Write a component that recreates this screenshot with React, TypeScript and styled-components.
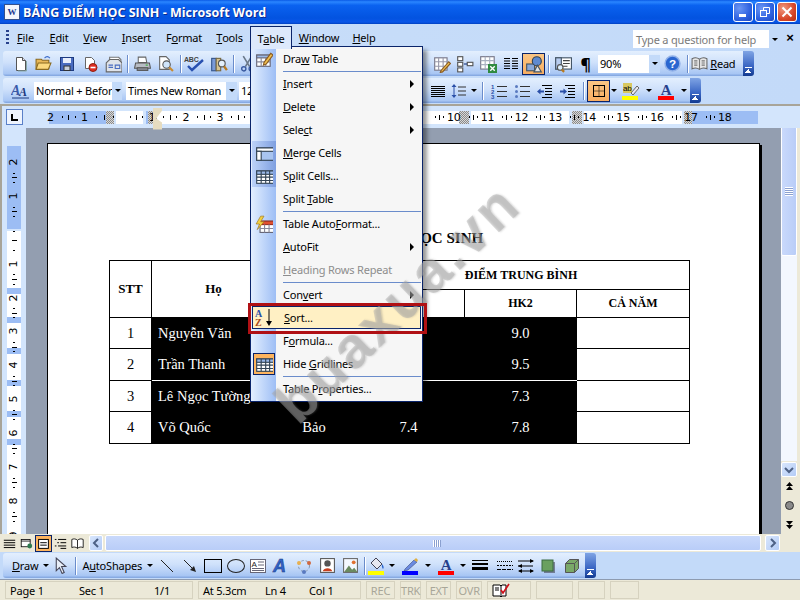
import React from 'react'
import styled, { createGlobalStyle, css } from 'styled-components'

const ui = '"Noto Sans", "DejaVu Sans", sans-serif'
const NAVY = '#0a246a'

const GlobalStyle = createGlobalStyle`
  html, body { margin: 0; padding: 0; width: 800px; height: 600px; overflow: hidden; }
  body { font-family: ${ui}; font-size: 11px; letter-spacing: -0.2px; color: #000; }
`

/* ---------- icons ---------- */

type IconProps = { size?: number }
const Svg: React.FC<React.PropsWithChildren<IconProps>> = ({ size = 16, children }) => (
  <svg width={size} height={size} viewBox="0 0 16 16" fill="none" style={{ display: 'block' }}>
    {children}
  </svg>
)

const NewDoc = () => (
  <Svg>
    <path d="M3.5 1.5h6l3 3v10h-9z" fill="#fff" stroke="#555" />
    <path d="M9.5 1.5v3h3" fill="#dde" stroke="#555" />
    <path d="M13.5 5v10H5" stroke="#8aa" />
  </Svg>
)
const OpenFolder = () => (
  <Svg size={17}>
    <path d="M1 4h5l1 1h6v8H1z" fill="#e8b858" stroke="#8a6a20" />
    <path d="M3 7.5h12l-2.5 6H1z" fill="#fbd97e" stroke="#8a6a20" />
    <path d="M9 3c1.5-2 3.500-2 5 0" stroke="#3a6ac8" />
  </Svg>
)
const Floppy = () => (
  <Svg>
    <rect x="1.500" y="1.500" width="13" height="13" fill="#4a6cc0" stroke="#1d3a80" />
    <rect x="4" y="2" width="8" height="5" fill="#e8eefc" />
    <rect x="5" y="10" width="6" height="4.500" fill="#c8d0dc" stroke="#333" />
  </Svg>
)
const Permission = () => (
  <Svg>
    <path d="M3.500 1.500h6l3 3v8h-9z" fill="#fff" stroke="#666" />
    <circle cx="11" cy="11.500" r="4" fill="#e02c20" stroke="#902010" />
    <rect x="8.500" y="10.700" width="5" height="1.600" fill="#fff" />
  </Svg>
)
const Email = () => (
  <Svg size={18}>
    <path d="M5 2h8l2 2v5H5z" fill="#fff" stroke="#777" />
    <path d="M2 7l3-3h8l3 3v8H2z" fill="#dfe3ea" stroke="#666" />
    <path d="M4 9h4M4 11h4M10 9h4v3h-4z" stroke="#4a6cc0" />
  </Svg>
)
const Printer = () => (
  <Svg size={17}>
    <path d="M4 2h7l1 5H4z" fill="#fff" stroke="#666" />
    <path d="M1.500 7.500h13l1 5h-15z" fill="#b8bcc4" stroke="#555" />
    <rect x="3" y="12" width="10" height="2.500" fill="#8a8e98" stroke="#555" />
    <rect x="11" y="9" width="2" height="1" fill="#30b030" />
  </Svg>
)
const Preview = () => (
  <Svg size={17}>
    <path d="M2.500 1.500h6l3 3v9h-9z" fill="#fff" stroke="#666" />
    <circle cx="9" cy="9" r="3.500" fill="#cfe4fa" stroke="#555" />
    <path d="M11.500 11.500l3.500 3.500" stroke="#c88a30" strokeWidth="2" />
  </Svg>
)
const Spell = () => (
  <svg width="24" height="18" viewBox="0 0 24 18" style={{ display: 'block' }}>
    <text x="1" y="7" fontFamily='"Liberation Sans", sans-serif' fontSize="7" fontWeight="700" fill="#444">
      ABC
    </text>
    <path d="M5 11l4 4L20 5" stroke="#2850b0" strokeWidth="2.400" fill="none" />
  </svg>
)
const Research = () => (
  <Svg size={18}>
    <rect x="1.500" y="3" width="4" height="11" fill="#7a9ad8" stroke="#35558c" />
    <rect x="5.500" y="3" width="4" height="11" fill="#d9c490" stroke="#7a6a40" />
    <circle cx="10.500" cy="7.500" r="3" fill="#e4f0fc" stroke="#555" />
    <path d="M12.500 10l2.500 3.500" stroke="#b87a20" strokeWidth="2" />
  </Svg>
)
const Scissors = () => (
  <Svg size={17}>
    <path d="M4 1l6 10M12 1L6 11" stroke="#6a7888" strokeWidth="1.500" />
    <circle cx="4.500" cy="13" r="2" stroke="#3a5aa0" strokeWidth="1.300" />
    <circle cx="11.500" cy="13" r="2" stroke="#3a5aa0" strokeWidth="1.300" />
  </Svg>
)
const TablesBorders = () => (
  <Svg size={18}>
    <rect x="1.500" y="2.500" width="11" height="11" fill="#fff" stroke="#778" />
    <path d="M1.500 6h11M1.500 10h11M5 2.500v11M9 2.500v11" stroke="#99a" />
    <path d="M7 14l7-8 1.500 1.500-7 7.500-2 .5z" fill="#f0c050" stroke="#8a5a20" />
  </Svg>
)
const InsertTable = () => (
  <Svg size={18}>
    <rect x="1.500" y="1.500" width="4.500" height="3.500" fill="#fff" stroke="#555" />
    <rect x="1.500" y="6.500" width="4.500" height="3.500" fill="#fff" stroke="#555" />
    <rect x="1.500" y="11.500" width="4.500" height="3.500" fill="#fff" stroke="#555" />
    <rect x="10" y="6.500" width="5" height="3" fill="#fff" stroke="#555" />
    <path d="M7 8h3" stroke="#1d3a80" />
  </Svg>
)
const ExcelSheet = () => (
  <Svg size={18}>
    <rect x="1.500" y="1.500" width="12" height="11" fill="#fff" stroke="#778" />
    <path d="M1.500 5h12M1.500 8.500h12M5.500 1.500v11M9.500 1.500v11" stroke="#a8b0c0" />
    <rect x="8" y="8" width="8" height="8" fill="#2f8a40" />
    <path d="M10 10l4 4M14 10l-4 4" stroke="#fff" strokeWidth="1.200" />
  </Svg>
)
const Columns = () => (
  <Svg>
    <path d="M1 2.500h6M1 5h6M1 7.500h6M1 10h6M1 12.500h6M9 2.500h6M9 5h6M9 7.500h6M9 10h6M9 12.500h6" stroke="#000" />
  </Svg>
)
const DrawingShapes = () => (
  <Svg size={18}>
    <rect x="1.500" y="8" width="7" height="6" fill="#8aa8d8" stroke="#456" />
    <circle cx="10.500" cy="5.500" r="4" fill="#5f8ad0" stroke="#345" />
    <path d="M8 15l3-6 3.500 6z" fill="#e6e6e6" stroke="#456" />
  </Svg>
)
const DocMap = () => (
  <Svg size={18}>
    <rect x="1.500" y="2.500" width="14" height="10" fill="#fff" stroke="#456" />
    <rect x="1.500" y="2.500" width="5" height="10" fill="#b8cdf0" stroke="#456" />
    <path d="M8 5h6M8 7.500h6M8 10h4" stroke="#444" />
    <circle cx="5.500" cy="11" r="2.500" fill="#dcefff" stroke="#555" />
    <path d="M7 13l2 2" stroke="#b87a20" strokeWidth="2" />
  </Svg>
)
const HelpCircle = () => (
  <Svg size={17}>
    <circle cx="8" cy="8" r="7" fill="#2a66d0" stroke="#90b0e8" strokeWidth="1.400" />
    <text x="8" y="12" textAnchor="middle" fontFamily='"Liberation Sans", sans-serif' fontWeight="700" fontSize="11" fill="#fff">
      ?
    </text>
  </Svg>
)
const OpenBook = () => (
  <Svg size={17}>
    <path d="M8 4C6 2.500 3 2.500 1 3.500V13c2-1 5-1 7 .5 2-1.500 5-1.500 7-.5V3.500C13 2.500 10 2.500 8 4z" fill="#e6e6e6" stroke="#666" />
    <path d="M8 4v9.500M3 5.500h3M3 7.500h3M3 9.500h3M10 5.500h3M10 7.500h3M10 9.500h3" stroke="#777" />
  </Svg>
)
const StyleIcon = () => (
  <svg width="19" height="18" viewBox="0 0 19 18" style={{ display: 'block' }}>
    <text x="0" y="13" fontFamily='"Liberation Serif", serif' fontStyle="italic" fontWeight="700" fontSize="14" fill="#3a5aa8">
      A
    </text>
    <text x="8" y="14" fontFamily='"Liberation Serif", serif' fontStyle="italic" fontWeight="700" fontSize="12" fill="#1d3a80">
      A
    </text>
    <path d="M1 16h17" stroke="#1d3a80" />
  </svg>
)
const Justify = () => (
  <Svg>
    <path d="M1 3.500h14M1 5.500h14M1 7.500h14M1 9.500h14M1 11.500h14M1 13.500h14" stroke="#000" />
  </Svg>
)
const LineSpacing = () => (
  <Svg>
    <path d="M3 1l2.500 3h-5zM3 15l2.500-3h-5z" fill="#2a4fa8" />
    <path d="M3 4v8" stroke="#2a4fa8" />
    <path d="M7 4h8M7 8h8M7 12h8" stroke="#333" />
  </Svg>
)
const Numbered = () => (
  <svg width="16" height="16" viewBox="0 0 16 16" style={{ display: 'block' }}>
    <text x="0" y="6" fontSize="6" fontWeight="700" fontFamily='"Liberation Sans", sans-serif' fill="#2a4fa8">1</text>
    <text x="0" y="11" fontSize="6" fontWeight="700" fontFamily='"Liberation Sans", sans-serif' fill="#2a4fa8">2</text>
    <text x="0" y="16" fontSize="6" fontWeight="700" fontFamily='"Liberation Sans", sans-serif' fill="#2a4fa8">3</text>
    <path d="M6 3.500h10M6 8.500h10M6 13.500h10" stroke="#333" />
  </svg>
)
const Bullets = () => (
  <Svg>
    <circle cx="2.500" cy="3.500" r="1.500" fill="#5a7ac0" />
    <circle cx="2.500" cy="8.500" r="1.500" fill="#5a7ac0" />
    <circle cx="2.500" cy="13.500" r="1.500" fill="#5a7ac0" />
    <path d="M6 3.500h10M6 8.500h10M6 13.500h10" stroke="#333" />
  </Svg>
)
const Outdent = () => (
  <Svg>
    <path d="M5 2.500h10M8 5.500h7M8 8.500h7M8 11.500h7M5 14.500h10" stroke="#000" />
    <path d="M0 8.500l3.500-3v2H7v2H3.500v2z" fill="#2a4fa8" />
  </Svg>
)
const Indent = () => (
  <Svg>
    <path d="M5 2.500h10M8 5.500h7M8 8.500h7M8 11.500h7M5 14.500h10" stroke="#000" />
    <path d="M7 8.500l-3.500-3v2H0v2h3.500v2z" fill="#2a4fa8" />
  </Svg>
)
const BorderBox = () => (
  <Svg>
    <rect x="2.500" y="2.500" width="11" height="11" stroke="#000" />
    <path d="M8 3.500v9M3.500 8h9" stroke="#000" strokeDasharray="1 1" />
  </Svg>
)
const Highlighter = () => (
  <svg width="18" height="18" viewBox="0 0 18 18" style={{ display: 'block' }}>
    <rect x="1" y="1" width="9" height="10" fill="#d8c860" />
    <text x="1" y="9" fontSize="8" fontFamily='"Liberation Sans", sans-serif' fill="#000">ab</text>
    <path d="M9 11l6-7 2 2-6 7z" fill="#e8e8f0" stroke="#666" />
    <rect x="0" y="14" width="16" height="4" fill="#ffff00" />
  </svg>
)
const FontColor: React.FC<{ bar?: string }> = ({ bar = '#ff0000' }) => (
  <svg width="17" height="18" viewBox="0 0 17 18" style={{ display: 'block' }}>
    <text x="8" y="13" textAnchor="middle" fontFamily='"Liberation Serif", serif' fontWeight="700" fontSize="15" fill="#27408b">
      A
    </text>
    <rect x="0" y="14" width="16" height="4" fill={bar} />
  </svg>
)
const Pointer = () => (
  <Svg size={17}>
    <path d="M4 1v12l3-3 2.500 5.500 2-1L9 9h4z" fill="#e8eef8" stroke="#445" />
  </Svg>
)
const LineTool = () => (
  <Svg>
    <path d="M2 2l12 12" stroke="#222" />
  </Svg>
)
const ArrowTool = () => (
  <Svg>
    <path d="M2 2l10 10" stroke="#222" />
    <path d="M14 14l-6-2 4-4z" fill="#222" />
  </Svg>
)
const TextBoxTool = () => (
  <svg width="16" height="14" viewBox="0 0 16 14" style={{ display: 'block' }}>
    <rect x=".5" y=".5" width="15" height="13" fill="#fff" stroke="#667" />
    <text x="1.500" y="8" fontSize="8" fontFamily='"Liberation Sans", sans-serif' fill="#222">A</text>
    <path d="M8 3h6M8 6h6M2 9.500h12M2 11.500h12" stroke="#667" />
  </svg>
)
const WordArt = () => (
  <svg width="18" height="18" viewBox="0 0 18 18" style={{ display: 'block' }}>
    <text x="1" y="15" fontFamily='"Liberation Sans", sans-serif' fontStyle="italic" fontWeight="700" fontSize="18" fill="#2f62c8" stroke="#1d3a80" strokeWidth=".5">
      A
    </text>
  </svg>
)
const Diagram = () => (
  <Svg>
    <circle cx="8" cy="8" r="5.500" stroke="#8898b0" strokeDasharray="2.500 2" />
    <circle cx="3" cy="5" r="2" fill="#e8b050" />
    <circle cx="13" cy="5" r="2" fill="#d06840" />
    <circle cx="8" cy="14" r="2" fill="#5a7ac0" />
  </Svg>
)
const ClipArt = () => (
  <Svg size={17}>
    <rect x="1.500" y="1.500" width="13" height="13" fill="#fff" stroke="#555" />
    <circle cx="8" cy="6" r="3" fill="#555" />
    <path d="M3.500 13.500c1-4 8-4 9 0z" fill="#c84020" />
  </Svg>
)
const PictureIcon = () => (
  <Svg size={17}>
    <rect x="1.500" y="1.500" width="13" height="13" fill="#f4f8ff" stroke="#666" />
    <path d="M2 14l4.500-6 3 4 2-2 3 4z" fill="#6a8a60" />
    <circle cx="11" cy="5" r="1.800" fill="#e07030" />
  </Svg>
)
const FillBucket = () => (
  <svg width="18" height="18" viewBox="0 0 18 18" style={{ display: 'block' }}>
    <path d="M3 6l5-5 6 6-5 5z" fill="#e8e8f0" stroke="#445" />
    <path d="M14 7c2 2 2 4 1 5-1-1-1.500-3-1-5z" fill="#2a66d0" />
    <rect x="0" y="14" width="16" height="4" fill="#ffff00" />
  </svg>
)
const PenColor = () => (
  <svg width="17" height="18" viewBox="0 0 17 18" style={{ display: 'block' }}>
    <path d="M3 12l9-9 3 2-9 8-4 1z" fill="#6a8ae0" stroke="#3a4a80" strokeWidth=".6" />
    <path d="M12 3l2-2 2 2-1 2z" fill="#e0b040" />
    <rect x="0" y="14" width="16" height="4" fill="#0000ff" />
  </svg>
)
const LineStyle = () => (
  <Svg>
    <rect x="0" y="2" width="16" height="1" fill="#000" />
    <rect x="0" y="5" width="16" height="2" fill="#000" />
    <rect x="0" y="9" width="16" height="3" fill="#000" />
  </Svg>
)
const DashStyle = () => (
  <Svg>
    <path d="M0 3.500h16" stroke="#000" strokeDasharray="1 1" />
    <path d="M0 7.500h16" stroke="#000" strokeDasharray="2 1" />
    <path d="M0 11.500h16" stroke="#000" strokeDasharray="4 1" />
  </Svg>
)
const ArrowStyle = () => (
  <Svg>
    <path d="M0 3h15M0 8h15M1 13h14" stroke="#000" />
    <path d="M16 3l-4-2v4zM0 8l4-2v4zM0 13l4-2v4zM16 13l-4-2v4z" fill="#000" />
  </Svg>
)
const ShadowBox = () => (
  <Svg>
    <rect x="4" y="4" width="11" height="11" fill="#445" opacity=".6" />
    <rect x="2" y="2" width="11" height="11" fill="#6aa060" stroke="#3a6a40" />
  </Svg>
)
const Cube = () => (
  <Svg>
    <path d="M1.500 5.500l4-4h9v9l-4 4h-9z" fill="#7aa868" stroke="#555" />
    <path d="M1.500 5.500h9v9M10.500 5.500l4-4" stroke="#555" />
  </Svg>
)
const DrawTableIcon = () => (
  <Svg size={18}>
    <rect x="1.500" y="4.500" width="12" height="10" fill="#fff" stroke="#667" />
    <rect x="1.500" y="4.500" width="12" height="2.500" fill="#9ab8e8" stroke="#667" />
    <path d="M1.500 10.500h12M5.500 7v7.500M9.500 7v7.500" stroke="#889" />
    <path d="M8 11l6-8 2 1.500-6 8-2.500 1z" fill="#f0c050" stroke="#8a5a20" />
  </Svg>
)
const MergeIcon = () => (
  <Svg size={18}>
    <rect x="1.500" y="3.500" width="15" height="11" fill="#a8c4f0" stroke="#345" />
    <rect x="1.500" y="3.500" width="15" height="3" fill="#fff" stroke="#345" />
    <rect x="1.500" y="6.500" width="4" height="8" fill="#fff" stroke="#345" />
  </Svg>
)
const GridIcon = () => (
  <Svg size={18}>
    <rect x="1.500" y="3.500" width="15" height="11" fill="#fff" stroke="#345" />
    <rect x="1.500" y="3.500" width="15" height="3" fill="#9ab8e8" stroke="#345" />
    <path d="M1.500 9h15M1.500 12h15M5.500 3.500v11M9.500 3.500v11M13 3.500v11" stroke="#345" />
  </Svg>
)
const AutoFormatIcon = () => (
  <Svg size={18}>
    <rect x="4.500" y="5.500" width="12" height="10" fill="#fff" stroke="#667" />
    <rect x="4.500" y="5.500" width="12" height="3" fill="#e05030" stroke="#a03020" />
    <path d="M4.500 12h12M8.500 8.500v7M12.500 8.500v7" stroke="#889" />
    <path d="M5 1l-4 7h3l-2 5 6-7H5l3-5z" fill="#f4d040" stroke="#a07820" strokeWidth=".6" />
  </Svg>
)
const SortIcon = () => (
  <svg width="22" height="19" viewBox="0 0 22 19" style={{ display: 'block' }}>
    <text x="1" y="8.500" fontFamily='"Liberation Serif", serif' fontWeight="700" fontSize="10" fill="#2a4fa8">A</text>
    <text x="1" y="18" fontFamily='"Liberation Serif", serif' fontWeight="700" fontSize="10" fill="#a84a20">Z</text>
    <path d="M15 1v15" stroke="#000" />
    <path d="M15 18l-3-5h6z" fill="#000" />
  </svg>
)
const StatusBook = () => (
  <svg width="19" height="16" viewBox="0 0 19 16" style={{ display: 'block' }}>
    <path d="M1 3h7l1 1 1-1h4v11h-4l-1 1-1-1H1z" fill="#fff" stroke="#000" />
    <path d="M9 4v10M3 6h4M3 8h4" stroke="#000" />
    <path d="M9 8l2 3 6-9" stroke="#d01018" strokeWidth="1.600" fill="none" />
  </svg>
)
const ViewNormal = () => (
  <Svg size={13}>
    <path d="M1 4h14M1 7h14M1 10h14M1 13h14" stroke="#000" strokeWidth="1.200" />
  </Svg>
)
const ViewWeb = () => (
  <Svg size={13}>
    <rect x="1.500" y="3" width="11" height="9" fill="#fff" stroke="#000" />
    <path d="M1.500 5h11" stroke="#000" />
    <circle cx="12" cy="11" r="3" fill="#2f7a50" />
  </Svg>
)
const ViewPrint = () => (
  <Svg size={13}>
    <rect x="2" y="3" width="12" height="11" fill="#fff" stroke="#000" strokeWidth="1.200" />
    <path d="M4 7h8M4 10h8" stroke="#000" strokeWidth="1.200" />
  </Svg>
)
const ViewOutline = () => (
  <Svg size={13}>
    <path d="M1 3h2M5 3h10M4 7h2M8 7h7M1 11h2M5 11h10M8 14h7" stroke="#000" strokeWidth="1.200" />
  </Svg>
)
const ViewRead = () => (
  <Svg size={13}>
    <path d="M8 4C6 2 3 2 1 3v10c2-1 5-1 7 1 2-2 5-2 7-1V3c-2-1-5-1-7 1z" fill="#fff" stroke="#000" />
    <path d="M8 4v10" stroke="#000" />
  </Svg>
)

/* ---------- window ---------- */

const Desktop = styled.div`
  position: relative;
  width: 800px;
  height: 600px;
  display: flex;
  flex-direction: column;
  overflow: hidden;
  background: #c3daf9;
`

const TitleBar = styled.div`
  flex: 0 0 24px;
  display: flex;
  align-items: center;
  padding: 0 3px 0 4px;
  color: #fff;
  font-family: "Open Sans", "Noto Sans", sans-serif;
  font-weight: 700;
  font-size: 12.5px;
  letter-spacing: 0;
  text-shadow: 1px 1px 0 #0a2a90;
  background: linear-gradient(180deg, #0a5ae6 0%, #2a86ff 8%, #0a62f0 22%, #0353e0 75%, #0a56e8 92%, #0040c0 100%);
`

const WordBadge = styled.span`
  width: 16px;
  height: 16px;
  margin-right: 3px;
  box-sizing: border-box;
  background: #f4f6fc;
  border: 1px solid #34508c;
  color: #1d3a90;
  font: 700 9px/14px "Liberation Serif", serif;
  text-align: center;
  text-shadow: none;
`

const TitleText = styled.span`
  flex: 1;
  white-space: nowrap;
`

const Caption = styled.button<{ $close?: boolean }>`
  width: 20px;
  height: 20px;
  margin-left: 2px;
  padding: 0;
  display: flex;
  align-items: center;
  justify-content: center;
  border: 1px solid #fff;
  border-radius: 3px;
  background: ${({ $close }) =>
    $close
      ? 'radial-gradient(circle at 30% 30%, #f09a80, #d8482a 60%, #b83010)'
      : 'radial-gradient(circle at 30% 30%, #6a96f4, #2f62e0 60%, #1c48c0)'};
`

const Dock = styled.div`
  flex: 0 0 80px;
  display: flex;
  flex-direction: column;
  background: linear-gradient(90deg, #c9def9 0%, #c3daf9 100%);
`

const MenuBar = styled.div`
  flex: 0 0 22px;
  margin-top: 2px;
  display: flex;
  align-items: stretch;
  padding-left: 3px;
`

const Grip = styled.span`
  flex: none;
  width: 3px;
  margin: 4px 0 4px 3px;
  background: repeating-linear-gradient(180deg, #27418c 0 2px, transparent 2px 4px);
`

const MenuEntry = styled.span<{ $open?: boolean; $w: number }>`
  flex: 0 0 ${({ $w }) => $w}px;
  box-sizing: border-box;
  display: flex;
  align-items: center;
  justify-content: center;
  ${({ $open }) =>
    $open &&
    css`
      position: relative;
      z-index: 6;
      height: 23px;
      background: #dde9fb;
      border: 1px solid ${NAVY};
      border-bottom: none;
    `}
`

const HelpBox = styled.div`
  margin: 4px 0 0 auto;
  width: 147px;
  height: 18px;
  box-sizing: border-box;
  display: flex;
  align-items: center;
  padding-left: 3px;
  background: #fff;
  color: #7a7a7a;
`

const ComboArrow = styled.span`
  margin-left: auto;
  align-self: stretch;
  flex: 0 0 11px;
  display: flex;
  align-items: center;
  justify-content: center;
  background: #c3daf9;
  &::after {
    content: '';
    border: 3px solid transparent;
    border-top: 3px solid #000;
    border-bottom: none;
  }
`

const HelpClose = styled.span`
  width: 20px;
  margin-top: 3px;
  text-align: center;
  font: 700 13px/18px "Liberation Sans", sans-serif;
`

const ToolbarRow = styled.div<{ $width: number; $top: number }>`
  flex: 0 0 25px;
  width: ${({ $width }) => $width}px;
  margin-top: ${({ $top }) => $top}px;
  margin-left: 3px;
  display: flex;
  align-items: center;
  box-sizing: border-box;
  border-radius: 3px 0 0 3px;
  background: linear-gradient(180deg, #e3effe 0%, #cfe1fb 45%, #a8c6f4 90%, #7fa3de 100%);
`

const Btn = styled.span<{ $w?: number; $active?: boolean }>`
  flex: 0 0 ${({ $w = 23 }) => $w}px;
  height: 22px;
  box-sizing: border-box;
  display: flex;
  align-items: center;
  justify-content: center;
  ${({ $active }) =>
    $active &&
    css`
      background: linear-gradient(180deg, #fbc684, #f8ae62);
      border: 1px solid ${NAVY};
    `}
`

const Sep = styled.span<{ $w?: number }>`
  flex: 0 0 ${({ $w = 6 }) => $w}px;
  height: 18px;
  display: flex;
  justify-content: center;
  &::after {
    content: '';
    width: 1px;
    background: #6a8ccb;
    box-shadow: 1px 0 0 #fff;
  }
`

const Spacer = styled.span<{ $w: number }>`
  flex: 0 0 ${({ $w }) => $w}px;
`

const Drop = styled.span<{ $w?: number }>`
  flex: 0 0 ${({ $w = 9 }) => $w}px;
  display: flex;
  justify-content: center;
  &::after {
    content: '';
    border: 3px solid transparent;
    border-top: 3px solid #000;
    border-bottom: none;
  }
`

const Combo = styled.span<{ $w: number; $left?: number }>`
  flex: 0 0 ${({ $w }) => $w}px;
  margin-left: ${({ $left = 0 }) => $left}px;
  height: 18px;
  box-sizing: border-box;
  padding-left: 2px;
  display: flex;
  align-items: center;
  background: #fff;
  white-space: nowrap;
  overflow: hidden;
`

const Chevron = styled.span`
  flex: 0 0 11px;
  align-self: stretch;
  margin-left: auto;
  margin-right: -11px;
  display: flex;
  align-items: flex-end;
  justify-content: center;
  padding-bottom: 3px;
  box-sizing: border-box;
  border-radius: 0 3px 3px 0;
  background: linear-gradient(180deg, #7fa4e4 0%, #3a66c4 60%, #123a90 100%);
  &::after {
    content: '';
    width: 7px;
    height: 6px;
    background:
      linear-gradient(#fff, #fff) top / 7px 1px no-repeat,
      linear-gradient(135deg, transparent 50%, #fff 50%) left bottom / 4px 4px no-repeat,
      linear-gradient(225deg, transparent 50%, #fff 50%) right bottom / 4px 4px no-repeat;
  }
`

/* ---------- rulers ---------- */

const RulerBand = styled.div`
  flex: 0 0 24px;
  display: flex;
  align-items: center;
  box-sizing: border-box;
  border-top: 2px solid #a8a498;
  border-left: 2px solid #a8a498;
  background: #d3e5fc;
  padding-left: 4px;
`

const TabBtn = styled.span`
  flex: 0 0 17px;
  height: 16px;
  box-sizing: border-box;
  border: 1px solid #5a80c8;
  background: #eef4fe;
  display: flex;
  align-items: center;
  justify-content: center;
  &::after {
    content: '';
    width: 5px;
    height: 5px;
    border-left: 2px solid #000;
    border-bottom: 2px solid #000;
  }
`

const HRuler = styled.div`
  position: relative;
  margin-left: 24px;
  flex: 0 0 711px;
  height: 13px;
  display: flex;
`

const HSeg = styled.span<{ $w: number; $c: 'blue' | 'white' | 'grid' | 'gap' }>`
  flex: 0 0 ${({ $w }) => $w}px;
  background: ${({ $c }) =>
    $c === 'blue'
      ? '#9cbdf4'
      : $c === 'white'
        ? '#fff'
        : $c === 'grid'
          ? 'repeating-conic-gradient(#8a8a8a 0 25%, #d8d8d8 0 50%) 0 0 / 2px 2px'
          : 'transparent'};
`

const HMarks = styled.div`
  position: absolute;
  inset: 0;
  display: flex;
  font: 11px/13px "DejaVu Sans", sans-serif;
`

const HCell = styled.span<{ $w: number }>`
  flex: 0 0 ${({ $w }) => $w}px;
  display: flex;
  align-items: center;
  justify-content: space-between;
  padding: 0 6px 0 ${({ $w }) => ($w < 10 ? 0 : 2)}px;
  box-sizing: border-box;
`

const HNum = styled.span`
  flex: 0 0 0;
  display: flex;
  justify-content: center;
`

const HTick = styled.i<{ $major?: boolean }>`
  width: 1px;
  height: ${({ $major }) => ($major ? 5 : 2)}px;
  background: #000;
`

const Hourglass = styled.span`
  position: absolute;
  left: 106px;
  top: -3px;
  width: 9px;
  height: 22px;
  background: #e6dcc0;
  clip-path: polygon(0 0, 100% 0, 100% 15%, 35% 50%, 100% 68%, 100% 100%, 0 100%, 0 68%, 0 50%, 0 15%);
`

const Workspace = styled.div`
  flex: 0 0 406px;
  display: flex;
  overflow: hidden;
`

const LeftRail = styled.div`
  flex: 0 0 26px;
  box-sizing: border-box;
  border-left: 2px solid #a8a498;
  background: #d3e5fc;
  padding: 18px 0 0 5px;
`

const VRuler = styled.div`
  position: relative;
  width: 14px;
  display: flex;
  flex-direction: column;
  overflow: hidden;
  height: 388px;
`

const VSeg = styled.span<{ $h: number; $c: 'blue' | 'white' | 'gap' }>`
  flex: 0 0 ${({ $h }) => $h}px;
  background: ${({ $c }) => ($c === 'gap' ? 'transparent' : $c === 'blue' ? '#9cbdf4' : '#fff')};
`

const VMarks = styled.div`
  position: absolute;
  inset: 0;
  padding-top: 6px;
  display: flex;
  flex-direction: column;
  font: 11px/14px "DejaVu Sans", sans-serif;
`

const VCell = styled.span`
  flex: 0 0 33.9px;
  display: flex;
  flex-direction: column;
  align-items: center;
  justify-content: space-between;
  padding: 3px 0;
  box-sizing: border-box;
`

const VTick = styled.i<{ $major?: boolean }>`
  height: 1px;
  width: ${({ $major }) => ($major ? 5 : 2)}px;
  background: #000;
`

const VNum = styled.span`
  transform: rotate(-90deg);
`

const DocArea = styled.div`
  flex: 1;
  background: #939eb0;
  padding: 15px 0 0 21px;
  overflow: hidden;
`

const Page = styled.div`
  width: 713px;
  height: 500px;
  box-sizing: border-box;
  background: #fff;
  border: 1px solid #000;
  box-shadow: 2px 2px 0 #000;
  padding: 84px 0 0 61px;
  font-family: "Liberation Serif", serif;
  letter-spacing: 0;
`

const DocTitle = styled.div`
  width: 582px;
  text-align: center;
  font-weight: 700;
  font-size: 15px;
  line-height: 20px;
  margin-bottom: 12px;
`

const Table = styled.table`
  border-collapse: collapse;
  table-layout: fixed;
  width: 580px;
  font-size: 14.5px;
`

const Th = styled.th<{ $big?: boolean }>`
  border: 1px solid #000;
  padding: 0;
  font-size: ${({ $big }) => ($big ? 13 : 12)}px;
  text-align: center;
`

const Td = styled.td<{ $sel?: boolean; $left?: boolean; $split?: boolean }>`
  border: 1px solid #000;
  padding: ${({ $left }) => ($left ? '0 0 0 6px' : '0')};
  text-align: ${({ $left }) => ($left ? 'left' : 'center')};
  white-space: nowrap;
  overflow: hidden;
  ${({ $sel }) =>
    $sel &&
    css`
      background: #000;
      color: #fff;
    `}
  ${({ $split }) =>
    $split &&
    css`
      border-bottom-color: #fff;
    `}
`

const VScroll = styled.div`
  flex: 0 0 19px;
  box-sizing: border-box;
  padding-right: 3px;
  background: #ece9d8;
  display: flex;
  flex-direction: column;
  align-items: center;
  margin-top: -24px;
  position: relative;
`

const SplitHandle = styled.span`
  flex: 0 0 6px;
  width: 100%;
  box-sizing: border-box;
  background: #ece9d8;
  border: 1px solid #555;
  border-left-color: #fff;
  border-top-color: #fff;
`

const ScrollBtn = styled.span<{ $w?: number; $h?: number }>`
  flex: 0 0 auto;
  width: ${({ $w = 16 }) => $w}px;
  height: ${({ $h = 15 }) => $h}px;
  box-sizing: border-box;
  border: 1px solid #fff;
  border-radius: 2px;
  background: linear-gradient(135deg, #d8e6fc, #b4ccf6);
  display: flex;
  align-items: center;
  justify-content: center;
  color: #4d6185;
`

const VTrack = styled.span`
  flex: 1;
  width: 16px;
  margin: 1px 0;
  background: #f3f7fe;
  display: flex;
  flex-direction: column;
`

const VThumb = styled.span`
  flex: 0 0 130px;
  box-sizing: border-box;
  border: 1px solid #fff;
  border-radius: 2px;
  background: linear-gradient(90deg, #c9d9fb, #b9cdf8);
  display: flex;
  align-items: center;
  justify-content: center;
  &::after {
    content: '';
    width: 8px;
    height: 9px;
    background: repeating-linear-gradient(180deg, #fff 0 1px, #8aa0d0 1px 2px);
  }
`

const BrowseBtn = styled.span`
  flex: 0 0 19px;
  display: flex;
  align-items: center;
  justify-content: center;
`

const Strip = styled.div`
  flex: 0 0 18px;
  display: flex;
  align-items: center;
  background: #ece9d8;
`

const ViewBtns = styled.div`
  flex: 0 0 89px;
  display: flex;
  align-items: center;
  padding-left: 1px;
  box-sizing: border-box;
`

const ViewBtn = styled.span<{ $active?: boolean }>`
  flex: 0 0 17px;
  height: 17px;
  box-sizing: border-box;
  display: flex;
  align-items: center;
  justify-content: center;
  ${({ $active }) =>
    $active &&
    css`
      background: #fdb45e;
      border: 1px solid ${NAVY};
    `}
`

const HTrack = styled.span`
  flex: 0 0 656px;
  height: 16px;
  margin: 0 4px 0 2px;
  box-sizing: border-box;
  border: 1px solid #fff;
  border-radius: 2px;
  background: linear-gradient(180deg, #c9d9fb, #b9cdf8);
  display: flex;
  align-items: center;
  padding-left: 327px;
  &::after {
    content: '';
    width: 8px;
    height: 7px;
    background: repeating-linear-gradient(90deg, #fff 0 1px, #8aa0d0 1px 2px);
  }
`

const DrawBand = styled.div`
  flex: 0 0 28px;
  box-sizing: border-box;
  padding-top: 1px;
  border-bottom: 1px solid #8e9bb0;
  background: #c3daf9;
`

const DrawBar = styled(ToolbarRow)`
  height: 25px;
`

const TextBtn = styled.span<{ $w: number }>`
  flex: 0 0 ${({ $w }) => $w}px;
  display: flex;
  align-items: center;
  gap: 4px;
  padding-left: 3px;
  box-sizing: border-box;
`

const RectShape = styled.span`
  display: block;
  width: 16px;
  height: 12px;
  border: 1px solid #000;
`

const OvalShape = styled.span`
  display: block;
  width: 16px;
  height: 12px;
  border: 1px solid #222;
  border-radius: 50%;
`

const StatusBar = styled.div`
  flex: 0 0 18px;
  display: flex;
  align-items: stretch;
  gap: 5px;
  padding: 1px 0 1px 5px;
  box-sizing: border-box;
  background: #ece9d8;
`

const Panel = styled.span<{ $w: number; $off?: boolean }>`
  flex: 0 0 ${({ $w }) => $w}px;
  box-sizing: border-box;
  display: flex;
  align-items: center;
  justify-content: ${({ $off }) => ($off ? 'center' : 'flex-start')};
  padding: 0 ${({ $off }) => ($off ? 0 : 4)}px;
  color: ${({ $off }) => ($off ? '#a8a698' : '#000')};
  border: 1px solid #d6d2bf;
  white-space: nowrap;
`

const Cell = styled.span<{ $w: number }>`
  flex: 0 0 ${({ $w }) => $w}px;
`

const BottomEdge = styled.div`
  flex: 0 0 2px;
  background: #0855dd;
`

/* ---------- table menu ---------- */

const TableMenu = styled.div`
  position: absolute;
  z-index: 5;
  left: 250px;
  top: 46px;
  width: 173px;
  box-sizing: border-box;
  padding: 0 1px 1px;
  border: 1px solid ${NAVY};
  background: linear-gradient(90deg, #e3efff 0, #9ebef5 25px, #f6f6f6 25px);
  box-shadow: 4px 4px 4px rgba(0, 0, 0, 0.4);
`

const Row = styled.div<{ $hot?: boolean; $disabled?: boolean }>`
  height: 23px;
  box-sizing: border-box;
  display: flex;
  align-items: center;
  color: ${({ $disabled }) => ($disabled ? '#8d8d8d' : '#000')};
  ${({ $hot }) =>
    $hot &&
    css`
      background: #fff0c4;
      border: 1px solid ${NAVY};
    `}
`

const IconCell = styled.span<{ $rare?: boolean; $checked?: boolean }>`
  flex: 0 0 24px;
  align-self: stretch;
  display: flex;
  align-items: center;
  justify-content: center;
  ${({ $rare }) =>
    $rare &&
    css`
      background: linear-gradient(90deg, #bcd2f8, #7e9fe0);
    `}
  & > span {
    display: flex;
    padding: 1px;
    border: ${({ $checked }) => ($checked ? `1px solid ${NAVY}` : 'none')};
    background: ${({ $checked }) => ($checked ? '#fdb45e' : 'transparent')};
  }
`

const Label = styled.span`
  flex: 1;
  padding-left: 7px;
  white-space: nowrap;
`

const SubArrow = styled.span`
  margin-right: 7px;
  border: 4px solid transparent;
  border-left: 4px solid #000;
  border-right: none;
`

const MenuSep = styled.div`
  height: 2px;
  box-sizing: border-box;
  margin-left: 31px;
  border-bottom: 1px solid #6a8ccb;
`

const RedFrame = styled.div`
  position: absolute;
  z-index: 7;
  left: 248px;
  top: 303px;
  width: 179px;
  height: 31px;
  box-sizing: border-box;
  border: 3px solid #b01014;
`

const Watermark = styled.div`
  position: absolute;
  z-index: 6;
  left: 240px;
  top: 273px;
  transform: rotate(-44deg);
  font: 700 58px/60px "Liberation Sans", sans-serif;
  letter-spacing: 3px;
  white-space: nowrap;
  color: rgba(170, 170, 170, 0.45);
  text-shadow: 1px 1px 2px rgba(120, 120, 120, 0.3);
  pointer-events: none;
`

const menuRows: Array<
  | 'sep'
  | { label: React.ReactNode; icon?: React.ReactNode; sub?: boolean; rare?: boolean; hot?: boolean; checked?: boolean; disabled?: boolean }
> = [
  { label: <>Dra<u>w</u> Table</>, icon: <DrawTableIcon /> },
  'sep',
  { label: <><u>I</u>nsert</>, sub: true },
  { label: <><u>D</u>elete</>, sub: true },
  { label: <>Sele<u>c</u>t</>, sub: true },
  { label: <><u>M</u>erge Cells</>, icon: <MergeIcon />, rare: true },
  { label: <>S<u>p</u>lit Cells...</>, icon: <GridIcon />, rare: true },
  { label: <>Split <u>T</u>able</> },
  'sep',
  { label: <>Table Auto<u>F</u>ormat...</>, icon: <AutoFormatIcon /> },
  { label: <><u>A</u>utoFit</>, sub: true },
  { label: <><u>H</u>eading Rows Repeat</>, disabled: true },
  'sep',
  { label: <>Con<u>v</u>ert</>, sub: true },
  { label: <><u>S</u>ort...</>, icon: <SortIcon />, hot: true },
  { label: <>F<u>o</u>rmula...</> },
  { label: <>Hide <u>G</u>ridlines</>, icon: <GridIcon />, checked: true },
  'sep',
  { label: <>Table P<u>r</u>operties...</> },
]

const menuBar: Array<[React.ReactNode, number, boolean?]> = [
  [<><u>F</u>ile</>, 33],
  [<><u>E</u>dit</>, 34],
  [<><u>V</u>iew</>, 38],
  [<><u>I</u>nsert</>, 45],
  [<>F<u>o</u>rmat</>, 50],
  [<><u>T</u>ools</>, 41],
  [<>T<u>a</u>ble</>, 42, true],
  [<><u>W</u>indow</>, 54],
  [<><u>H</u>elp</>, 36],
]

// ruler segments are [length, kind], laid out from the ruler's left or top edge
const hSegs: Array<[number, 'blue' | 'white' | 'grid' | 'gap']> = [
  [2, 'gap'], [57, 'blue'], [8, 'grid'], [2, 'gap'], [27, 'white'], [3, 'gap'], [2, 'blue'], [9, 'grid'], [302, 'white'],
  [10, 'grid'], [2, 'gap'], [98, 'white'], [3, 'gap'], [10, 'grid'], [2, 'gap'], [98, 'white'], [2, 'gap'], [8, 'grid'], [66, 'blue'],
]
// the numbers between 4 and 10 lie under the open menu
const hNums = ['2', '1', '', '1', '2', '3', '4', '', '', '', '', '', '10', '11', '12', '13', '14', '15', '16', '17', '18']

const vSegs: Array<[number, 'blue' | 'white' | 'gap']> = [
  [83, 'blue'], [2, 'gap'], [57, 'white'], [6, 'blue'], [23, 'white'], [6, 'blue'], [25, 'white'], [6, 'blue'], [26, 'white'],
  [6, 'blue'], [25, 'white'], [6, 'blue'], [22, 'white'], [6, 'blue'], [200, 'white'],
]
const vNums = ['2', '1', '', '1', '2', '3', '4', '5', '6', '7', '8', '9']

const students = [
  { stt: 1, ho: 'Nguyễn Văn', hk2: '9.0', h: 31 },
  { stt: 2, ho: 'Trần Thanh', hk2: '9.5', h: 32, split: true },
  { stt: 3, ho: 'Lê Ngọc Tường', hk2: '7.3', h: 31 },
  { stt: 4, ho: 'Võ Quốc', ten: 'Bảo', hk1: '7.4', hk2: '7.8', h: 32 },
]

const App: React.FC = () => (
  <Desktop>
    <GlobalStyle />
    <TitleBar>
      <WordBadge>W</WordBadge>
      <TitleText>BẢNG ĐIỂM HỌC SINH - Microsoft Word</TitleText>
      <Caption>
        <svg width="12" height="12" viewBox="0 0 12 12"><rect x="2" y="8" width="7" height="3" fill="#fff" /></svg>
      </Caption>
      <Caption>
        <svg width="12" height="12" viewBox="0 0 12 12" fill="none" stroke="#fff">
          <rect x="1.500" y="4.500" width="6" height="6" />
          <path d="M4.500 4V1.500h6v6H8" />
        </svg>
      </Caption>
      <Caption $close>
        <svg width="12" height="12" viewBox="0 0 12 12"><path d="M1.500 1.500l9 9M10.500 1.500l-9 9" stroke="#fff" strokeWidth="2" /></svg>
      </Caption>
    </TitleBar>

    <Dock>
      <MenuBar>
        <Grip />
        {menuBar.map(([label, w, open], i) => (
          <MenuEntry key={i} $w={w} $open={open}>{label}</MenuEntry>
        ))}
        <HelpBox>
          Type a question for help
          <ComboArrow />
        </HelpBox>
        <HelpClose>×</HelpClose>
      </MenuBar>

      <ToolbarRow $width={740} $top={2}>
        <Grip />
        <Btn><NewDoc /></Btn>
        <Btn><OpenFolder /></Btn>
        <Btn><Floppy /></Btn>
        <Btn><Permission /></Btn>
        <Btn><Email /></Btn>
        <Sep $w={7} />
        <Btn><Printer /></Btn>
        <Btn><Preview /></Btn>
        <Sep />
        <Btn $w={24}><Spell /></Btn>
        <Btn><Research /></Btn>
        <Sep />
        <Btn><Scissors /></Btn>
        <Spacer $w={171} />
        <Btn><TablesBorders /></Btn>
        <Btn><InsertTable /></Btn>
        <Btn><ExcelSheet /></Btn>
        <Btn><Columns /></Btn>
        <Btn $active><DrawingShapes /></Btn>
        <Sep />
        <Btn><DocMap /></Btn>
        <Btn><span style={{ fontWeight: 700, fontSize: 16 }}>¶</span></Btn>
        <Combo $w={62} $left={1}>
          90%
          <ComboArrow />
        </Combo>
        <Btn $w={24}><HelpCircle /></Btn>
        <Sep />
        <Btn $w={46}><OpenBook />&nbsp;<span><u>R</u>ead</span></Btn>
        <Chevron />
      </ToolbarRow>

      <ToolbarRow $width={687} $top={2}>
        <Grip />
        <Btn $w={22}><StyleIcon /></Btn>
        <Combo $w={88} $left={3}>
          Normal + Befor
          <ComboArrow />
        </Combo>
        <Combo $w={111} $left={4}>
          Times New Roman
          <ComboArrow />
        </Combo>
        <Combo $w={30} $left={2}>12</Combo>
        <Spacer $w={157} />
        <Btn><Justify /></Btn>
        <Btn $w={20}><LineSpacing /></Btn>
        <Drop $w={9} />
        <Sep $w={9} />
        <Btn><Numbered /></Btn>
        <Btn><Bullets /></Btn>
        <Btn><Outdent /></Btn>
        <Btn><Indent /></Btn>
        <Sep $w={8} />
        <Btn $active><BorderBox /></Btn>
        <Drop $w={8} />
        <Btn $w={26}><Highlighter /></Btn>
        <Drop />
        <Btn $w={26}><FontColor /></Btn>
        <Drop />
        <Chevron />
      </ToolbarRow>
    </Dock>

    <RulerBand>
      <TabBtn />
      <HRuler>
        {hSegs.map(([w, c], i) => <HSeg key={i} $w={w} $c={c} />)}
        <HMarks>
          {hNums.map((n, i) => (
            <HCell key={i} $w={i === 0 ? 6 : 33.9}>
              {i > 0 && <HTick />}
              {i > 0 && <HTick $major />}
              {i > 0 && <HTick />}
              <HNum>{n}</HNum>
            </HCell>
          ))}
        </HMarks>
        <Hourglass />
      </HRuler>
    </RulerBand>

    <Workspace>
      <LeftRail>
        <VRuler>
          {vSegs.map(([h, c], i) => <VSeg key={i} $h={h} $c={c} />)}
          <VMarks>
            {vNums.map((n, i) => (
              <VCell key={i}>
                <VNum>{n}</VNum>
                <VTick />
                <VTick $major />
                <VTick />
              </VCell>
            ))}
          </VMarks>
        </VRuler>
      </LeftRail>

      <DocArea>
        <Page>
          <DocTitle>BẢNG ĐIỂM HỌC SINH</DocTitle>
          <Table>
            <colgroup>
              <col style={{ width: 42 }} />
              <col style={{ width: 124 }} />
              <col style={{ width: 77 }} />
              <col style={{ width: 112 }} />
              <col style={{ width: 112 }} />
              <col style={{ width: 113 }} />
            </colgroup>
            <thead>
              <tr style={{ height: 29 }}>
                <Th rowSpan={2} $big>STT</Th>
                <Th rowSpan={2} $big>Họ</Th>
                <Th rowSpan={2} />
                <Th colSpan={3}>ĐIỂM TRUNG BÌNH</Th>
              </tr>
              <tr style={{ height: 28 }}>
                <Th />
                <Th>HK2</Th>
                <Th>CẢ NĂM</Th>
              </tr>
            </thead>
            <tbody>
              {students.map((s) => (
                <tr key={s.stt} style={{ height: s.h }}>
                  <Td>{s.stt}</Td>
                  <Td $sel $left $split={s.split}>{s.ho}</Td>
                  <Td $sel $split={s.split}>{s.ten}</Td>
                  <Td $sel $split={s.split}>{s.hk1}</Td>
                  <Td $sel $split={s.split}>{s.hk2}</Td>
                  <Td />
                </tr>
              ))}
            </tbody>
          </Table>
        </Page>
      </DocArea>

      <VScroll>
        <SplitHandle />
        <ScrollBtn>
          <svg width="10" height="8" viewBox="0 0 10 8"><path d="M1 6l4-4 4 4" stroke="currentColor" strokeWidth="2" fill="none" /></svg>
        </ScrollBtn>
        <VTrack><VThumb /></VTrack>
        <ScrollBtn>
          <svg width="10" height="8" viewBox="0 0 10 8"><path d="M1 2l4 4 4-4" stroke="currentColor" strokeWidth="2" fill="none" /></svg>
        </ScrollBtn>
        <BrowseBtn>
          <svg width="9" height="9" viewBox="0 0 9 9"><path d="M4.500 0L8 4H1zM4.500 4L8 8H1z" fill="#000" /></svg>
        </BrowseBtn>
        <BrowseBtn>
          <svg width="9" height="9" viewBox="0 0 9 9"><circle cx="4.500" cy="4.500" r="4" fill="#8a8a8a" stroke="#333" /></svg>
        </BrowseBtn>
        <BrowseBtn>
          <svg width="9" height="9" viewBox="0 0 9 9"><path d="M1 1h7L4.500 5zM1 5h7L4.500 9z" fill="#000" /></svg>
        </BrowseBtn>
      </VScroll>
    </Workspace>

    <Strip>
      <ViewBtns>
        <ViewBtn><ViewNormal /></ViewBtn>
        <ViewBtn><ViewWeb /></ViewBtn>
        <ViewBtn $active><ViewPrint /></ViewBtn>
        <ViewBtn><ViewOutline /></ViewBtn>
        <ViewBtn><ViewRead /></ViewBtn>
      </ViewBtns>
      <ScrollBtn $w={14} $h={16}>
        <svg width="8" height="10" viewBox="0 0 8 10"><path d="M6 1L2 5l4 4" stroke="currentColor" strokeWidth="2" fill="none" /></svg>
      </ScrollBtn>
      <HTrack />
      <ScrollBtn $w={15} $h={16}>
        <svg width="8" height="10" viewBox="0 0 8 10"><path d="M2 1l4 4-4 4" stroke="currentColor" strokeWidth="2" fill="none" /></svg>
      </ScrollBtn>
    </Strip>

    <DrawBand>
      <DrawBar $width={582} $top={0}>
        <Grip />
        <TextBtn $w={40}><span><u>D</u>raw</span><Drop $w={7} /></TextBtn>
        <Btn $w={22}><Pointer /></Btn>
        <Sep $w={8} />
        <TextBtn $w={76}><span>A<u>u</u>toShapes</span><Drop $w={7} /></TextBtn>
        <Btn><LineTool /></Btn>
        <Btn><ArrowTool /></Btn>
        <Btn><RectShape /></Btn>
        <Btn><OvalShape /></Btn>
        <Btn $w={22}><TextBoxTool /></Btn>
        <Btn $w={24}><WordArt /></Btn>
        <Btn $w={22}><Diagram /></Btn>
        <Btn $w={24}><ClipArt /></Btn>
        <Btn><PictureIcon /></Btn>
        <Sep $w={5} />
        <Btn $w={20}><FillBucket /></Btn>
        <Drop $w={10} />
        <Btn $w={26}><PenColor /></Btn>
        <Drop $w={10} />
        <Btn $w={26}><FontColor /></Btn>
        <Drop $w={8} />
        <Btn $w={26}><LineStyle /></Btn>
        <Btn><DashStyle /></Btn>
        <Btn $w={20}><ArrowStyle /></Btn>
        <Btn $w={24}><ShadowBox /></Btn>
        <Btn><Cube /></Btn>
        <Chevron />
      </DrawBar>
    </DrawBand>

    <StatusBar>
      <Panel $w={188}>
        <Cell $w={69}>Page 1</Cell>
        <Cell $w={75}>Sec 1</Cell>
        <Cell $w={30}>1/1</Cell>
      </Panel>
      <Panel $w={163}>
        <Cell $w={62}>At 5.3cm</Cell>
        <Cell $w={44}>Ln 4</Cell>
        <Cell $w={40}>Col 1</Cell>
      </Panel>
      <Panel $w={29} $off>REC</Panel>
      <Panel $w={21} $off>TRK</Panel>
      <Panel $w={25} $off>EXT</Panel>
      <Panel $w={26} $off>OVR</Panel>
      <Panel $w={44}><StatusBook /></Panel>
      <Panel $w={37} />
      <Panel $w={27} />
      <Panel $w={29} />
    </StatusBar>
    <BottomEdge />

    <TableMenu>
      {menuRows.map((row, i) =>
        row === 'sep' ? (
          <MenuSep key={i} />
        ) : (
          <Row key={i} $hot={row.hot} $disabled={row.disabled}>
            <IconCell $rare={row.rare} $checked={row.checked}>
              <span>{row.icon}</span>
            </IconCell>
            <Label>{row.label}</Label>
            {row.sub && <SubArrow />}
          </Row>
        ),
      )}
    </TableMenu>
    <RedFrame />
    <Watermark>buaxua.vn</Watermark>
  </Desktop>
)

export default App
